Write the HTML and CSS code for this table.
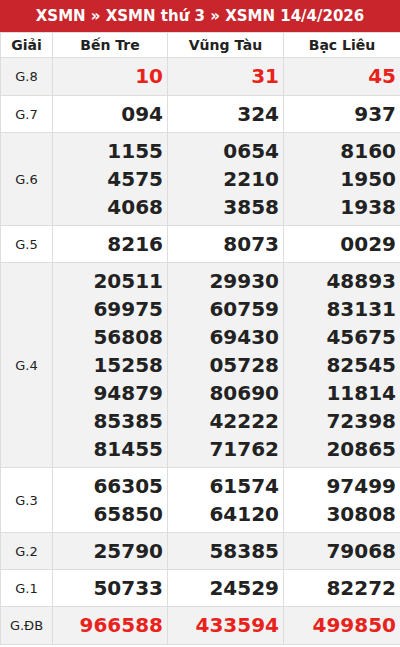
FILE: index.html
```html
<!DOCTYPE html>
<html lang="vi">
<head>
<meta charset="utf-8">
<link rel="stylesheet" href="styles.css">
</head>
<body>
<div class="box">
  <div class="title">XSMN » XSMN thứ 3 » XSMN 14/4/2026</div>
  <table class="kq">
    <colgroup><col class="c0"><col class="c1"><col class="c2"><col class="c3"></colgroup>
    <thead>
      <tr><th>Giải</th><th>Bến Tre</th><th>Vũng Tàu</th><th>Bạc Liêu</th></tr>
    </thead>
    <tbody>
      <tr class="alt"><td class="lb">G.8</td><td class="n red">10</td><td class="n red">31</td><td class="n red">45</td></tr>
      <tr><td class="lb">G.7</td><td class="n">094</td><td class="n">324</td><td class="n">937</td></tr>
      <tr class="alt"><td class="lb">G.6</td><td class="n">1155<br>4575<br>4068</td><td class="n">0654<br>2210<br>3858</td><td class="n">8160<br>1950<br>1938</td></tr>
      <tr><td class="lb">G.5</td><td class="n">8216</td><td class="n">8073</td><td class="n">0029</td></tr>
      <tr class="alt"><td class="lb">G.4</td><td class="n">20511<br>69975<br>56808<br>15258<br>94879<br>85385<br>81455</td><td class="n">29930<br>60759<br>69430<br>05728<br>80690<br>42222<br>71762</td><td class="n">48893<br>83131<br>45675<br>82545<br>11814<br>72398<br>20865</td></tr>
      <tr><td class="lb">G.3</td><td class="n">66305<br>65850</td><td class="n">61574<br>64120</td><td class="n">97499<br>30808</td></tr>
      <tr class="alt"><td class="lb">G.2</td><td class="n">25790</td><td class="n">58385</td><td class="n">79068</td></tr>
      <tr><td class="lb">G.1</td><td class="n">50733</td><td class="n">24529</td><td class="n">82272</td></tr>
      <tr class="alt"><td class="lb">G.ĐB</td><td class="n red">966588</td><td class="n red">433594</td><td class="n red">499850</td></tr>
    </tbody>
  </table>
</div>
</body>
</html>
```

FILE: styles.css
```css
html, body {
  margin: 0;
  padding: 0;
  background: #fff;
}
body {
  font-family: "DejaVu Sans", sans-serif;
  color: #222;
}
.box {
  width: 400px;
}
.title {
  background: #c9252c;
  color: #fff;
  font-weight: bold;
  font-size: 15px;
  height: 32px;
  line-height: 32px;
  text-align: center;
}
.kq {
  width: 400px;
  table-layout: fixed;
  border-collapse: collapse;
}
.c0 { width: 52px; }
.c1 { width: 115px; }
.c2 { width: 116px; }
.c3 { width: 117px; }
.kq th, .kq td {
  border: 1px solid #ddd;
  padding: 0;
}
.kq th {
  font-size: 14px;
  font-weight: bold;
  height: 24px;
  color: #222;
  background: #fff;
}
.kq tr.alt td {
  background: #f2f2f3;
}
.lb {
  font-size: 13px;
  text-align: center;
  color: #222;
}
.kq td.n {
  text-align: right;
  font-weight: bold;
  font-size: 20px;
  line-height: 28px;
  padding: 4px 4px 4px 4px;
}
.kq td.red {
  color: #e8231b;
  line-height: 29px;
}
```
